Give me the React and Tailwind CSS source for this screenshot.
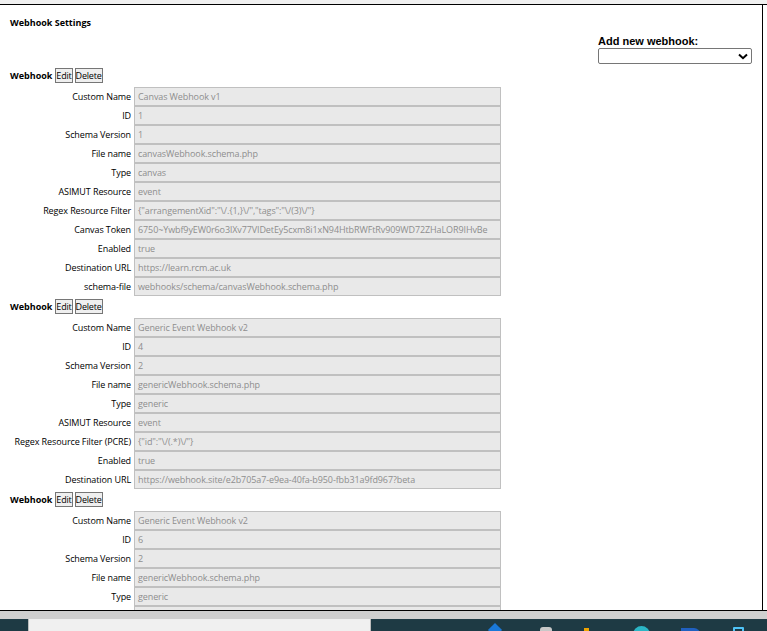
import React from 'react'

const webhooks = [
  [
    ['Custom Name', 'Canvas Webhook v1'],
    ['ID', '1'],
    ['Schema Version', '1'],
    ['File name', 'canvasWebhook.schema.php'],
    ['Type', 'canvas'],
    ['ASIMUT Resource', 'event'],
    ['Regex Resource Filter', '{"arrangementXid":"\\/.{1,}\\/","tags":"\\/(3)\\/"}'],
    ['Canvas Token', '6750~Ywbf9yEW0r6o3lXv77VIDetEy5cxm8i1xN94HtbRWFtRv909WD72ZHaLOR9IHvBe'],
    ['Enabled', 'true'],
    ['Destination URL', 'https://learn.rcm.ac.uk'],
    ['schema-file', 'webhooks/schema/canvasWebhook.schema.php'],
  ],
  [
    ['Custom Name', 'Generic Event Webhook v2'],
    ['ID', '4'],
    ['Schema Version', '2'],
    ['File name', 'genericWebhook.schema.php'],
    ['Type', 'generic'],
    ['ASIMUT Resource', 'event'],
    ['Regex Resource Filter (PCRE)', '{"id":"\\/(.*)\\/"}'],
    ['Enabled', 'true'],
    ['Destination URL', 'https://webhook.site/e2b705a7-e9ea-40fa-b950-fbb31a9fd967?beta'],
  ],
  [
    ['Custom Name', 'Generic Event Webhook v2'],
    ['ID', '6'],
    ['Schema Version', '2'],
    ['File name', 'genericWebhook.schema.php'],
    ['Type', 'generic'],
    ['ASIMUT Resource', 'event'],
  ],
]

function WebhookBlock({ fields }) {
  return (
    <div>
      <div className="h-[22px] flex items-start pt-[3px] gap-[2px]">
        <span className="font-bold text-[9px] leading-[15px] mr-[1px]">Webhook</span>
        <button className="h-[15px] px-0 border border-[#767676] bg-[#efefef] text-[9px] tracking-[-0.2px] leading-[12px]">Edit</button>
        <button className="h-[15px] px-0 border border-[#767676] bg-[#efefef] text-[9px] tracking-[-0.2px] leading-[12px]">Delete</button>
      </div>
      {fields.map(([label, value], i) => (
        <div key={i} className="flex h-[19px] items-center">
          <div className="w-[121px] text-right text-[9px] tracking-[-0.1px] text-black whitespace-nowrap">{label}</div>
          <div className="ml-[3px] w-[367px] h-[19px] border border-[#c0c0c0] bg-[#e9e9e9] px-[3px] text-[9px] tracking-[-0.1px] leading-[17px] text-[#8e8e8e] whitespace-nowrap overflow-hidden">
            {value}
          </div>
        </div>
      ))}
    </div>
  )
}

export default function App() {
  return (
    <div className="w-[767px] h-[631px] flex flex-col overflow-hidden bg-white" style={{ fontFamily: '"Open Sans", sans-serif' }}>
      <div className="h-[4px] bg-[#f0f0f0] shrink-0" />
      <div className="flex-1 min-h-0 flex border-t border-black">
        <div className="w-[763px] border-r border-black overflow-hidden pl-[10px] pt-[9px]">
          <h1 className="font-bold text-[9px] leading-[18px]">Webhook Settings</h1>
          <div className="flex justify-end pr-[10px] mt-[3px]">
            <div className="w-[154px]">
              <div className="font-bold text-[11px] leading-[13px] text-black" style={{ fontFamily: '"Liberation Sans", Arial, sans-serif' }}>
                Add new webhook:
              </div>
              <div className="h-[16px] border border-[#767676] rounded-[2px] flex items-center justify-end pr-[3px]">
                <svg width="10" height="7" viewBox="0 0 10 7">
                  <path d="M1 1.5 L5 5.2 L9 1.5" stroke="black" strokeWidth="2" fill="none" />
                </svg>
              </div>
            </div>
          </div>
          <div className="mt-[1px]">
            {webhooks.map((w, i) => (
              <WebhookBlock key={i} fields={w} />
            ))}
          </div>
        </div>
        <div className="flex-1 bg-white" />
      </div>
      <div className="shrink-0 border-t border-black h-[9px] bg-[#cfcfcf]" />
      <div className="shrink-0 h-[12px] bg-[#1e3a44] flex relative">
        <div className="ml-[28px] w-[343px] bg-[#f0f0f0] border-l border-r border-[#bdbdbd]" />
        <div className="absolute left-[490px] top-[6px] w-[10px] h-[10px] rotate-45 bg-[#1a78d8]" />
        <div className="absolute left-[540px] top-[8px] w-[12px] h-[6px] rounded-t-[3px] bg-[#c8c8c8]" />
        <div className="absolute left-[584px] top-[9px] w-[5px] h-[4px] bg-[#f0a400]" />
        <div className="absolute left-[633px] top-[7px] w-[17px] h-[17px] rounded-full bg-[#2bb6c6]" />
        <div className="absolute left-[681px] top-[9px] w-[19px] h-[6px] bg-[#2060c0] rounded-tr-[6px]" />
        <div className="absolute left-[733px] top-[8px] w-[11px] h-[8px] border-2 border-[#4fc3f7] rounded-[1px]" />
      </div>
    </div>
  )
}
